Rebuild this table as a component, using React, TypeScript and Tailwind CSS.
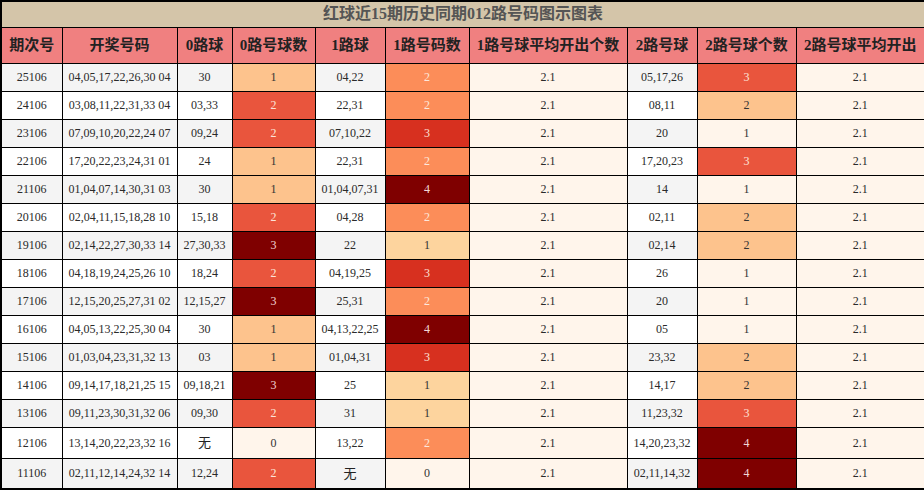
const ROWS: [string, string, string, number, string, number, string, number][] = [
  ["25106", "04,05,17,22,26,30 04", "30", 1, "04,22", 2, "05,17,26", 3],
  ["24106", "03,08,11,22,31,33 04", "03,33", 2, "22,31", 2, "08,11", 2],
  ["23106", "07,09,10,20,22,24 07", "09,24", 2, "07,10,22", 3, "20", 1],
  ["22106", "17,20,22,23,24,31 01", "24", 1, "22,31", 2, "17,20,23", 3],
  ["21106", "01,04,07,14,30,31 03", "30", 1, "01,04,07,31", 4, "14", 1],
  ["20106", "02,04,11,15,18,28 10", "15,18", 2, "04,28", 2, "02,11", 2],
  ["19106", "02,14,22,27,30,33 14", "27,30,33", 3, "22", 1, "02,14", 2],
  ["18106", "04,18,19,24,25,26 10", "18,24", 2, "04,19,25", 3, "26", 1],
  ["17106", "12,15,20,25,27,31 02", "12,15,27", 3, "25,31", 2, "20", 1],
  ["16106", "04,05,13,22,25,30 04", "30", 1, "04,13,22,25", 4, "05", 1],
  ["15106", "01,03,04,23,31,32 13", "03", 1, "01,04,31", 3, "23,32", 2],
  ["14106", "09,14,17,18,21,25 15", "09,18,21", 3, "25", 1, "14,17", 2],
  ["13106", "09,11,23,30,31,32 06", "09,30", 2, "31", 1, "11,23,32", 3],
  ["12106", "13,14,20,22,23,32 16", "无", 0, "13,22", 2, "14,20,23,32", 4],
  ["11106", "02,11,12,14,24,32 14", "12,24", 2, "无", 0, "02,11,14,32", 4],
];

// OrRd steps: 0路 (0..3), 1路 (0..4), 2路 (1..4)
const ZERO_SCALE = [
  "bg-[#fff5eb] text-[#333]",
  "bg-[#fdc38d] text-[#333]",
  "bg-[#e9553d] text-[#fde3d8]",
  "bg-[#7f0000] text-[#f3d6d6]",
];
const ONE_SCALE = [
  "bg-[#fff5eb] text-[#333]",
  "bg-[#fdd49e] text-[#333]",
  "bg-[#fc8d59] text-[#fde8dc]",
  "bg-[#d7301f] text-[#fde3d8]",
  "bg-[#7f0000] text-[#f3d6d6]",
];
const TWO_SCALE = [
  "",
  "bg-[#fff5eb] text-[#333]",
  "bg-[#fdc38d] text-[#333]",
  "bg-[#e9553d] text-[#fde3d8]",
  "bg-[#7f0000] text-[#f3d6d6]",
];

const HEADERS = [
  "期次号",
  "开奖号码",
  "0路球",
  "0路号球数",
  "1路球",
  "1路号码数",
  "1路号球平均开出个数",
  "2路号球",
  "2路号球个数",
  "2路号球平均开出",
];

const WIDTHS = ["w-[61px]", "w-[115px]", "w-[55px]", "w-[83px]", "w-[70px]", "w-[84px]", "w-[158px]", "w-[70px]", "w-[99px]", "w-[129px]"];

const cell = "border border-black text-center p-0 whitespace-nowrap";

export default function App() {
  return (
    <div className="w-[924px] h-[490px] bg-white overflow-hidden font-['Liberation_Serif','Noto_Sans_CJK_SC',serif]">
      <table className="w-[924px] table-fixed border-collapse border-2 border-black">
        <colgroup>
          {WIDTHS.map((w) => (
            <col key={w} className={w} />
          ))}
        </colgroup>
        <thead>
          <tr className="h-[26px]">
            <th colSpan={10} className={`${cell} bg-[#d4c5a9] text-[#555] text-[16px] font-bold leading-none`}>
              红球近15期历史同期012路号码图示图表
            </th>
          </tr>
          <tr className="h-[36px]">
            {HEADERS.map((h) => (
              <th key={h} className={`${cell} bg-[#f08080] text-[#222] text-[15px] font-bold leading-none`}>
                {h}
              </th>
            ))}
          </tr>
        </thead>
        <tbody className="text-[12px] text-[#2a2a2a] leading-none">
          {ROWS.map((r, i) => {
            const stripe = i % 2 === 0 ? "bg-[#f4f4f4]" : "bg-white";
            const tall = r[2] === "无" || r[4] === "无";
            return (
              <tr key={r[0]} className={tall ? "h-[31px]" : "h-[28px]"}>
                <td className={`${cell} ${stripe}`}>{r[0]}</td>
                <td className={`${cell} ${stripe}`}>{r[1]}</td>
                <td className={`${cell} ${stripe} ${r[2] === "无" ? "text-[13px] text-[#222]" : ""}`}>{r[2]}</td>
                <td className={`${cell} ${ZERO_SCALE[r[3]]}`}>{r[3]}</td>
                <td className={`${cell} ${stripe} ${r[4] === "无" ? "text-[13px] text-[#222]" : ""}`}>{r[4]}</td>
                <td className={`${cell} ${ONE_SCALE[r[5]]}`}>{r[5]}</td>
                <td className={`${cell} bg-[#fff5eb]`}>2.1</td>
                <td className={`${cell} ${stripe}`}>{r[6]}</td>
                <td className={`${cell} ${TWO_SCALE[r[7]]}`}>{r[7]}</td>
                <td className={`${cell} bg-[#fff5eb]`}>2.1</td>
              </tr>
            );
          })}
        </tbody>
      </table>
    </div>
  );
}
